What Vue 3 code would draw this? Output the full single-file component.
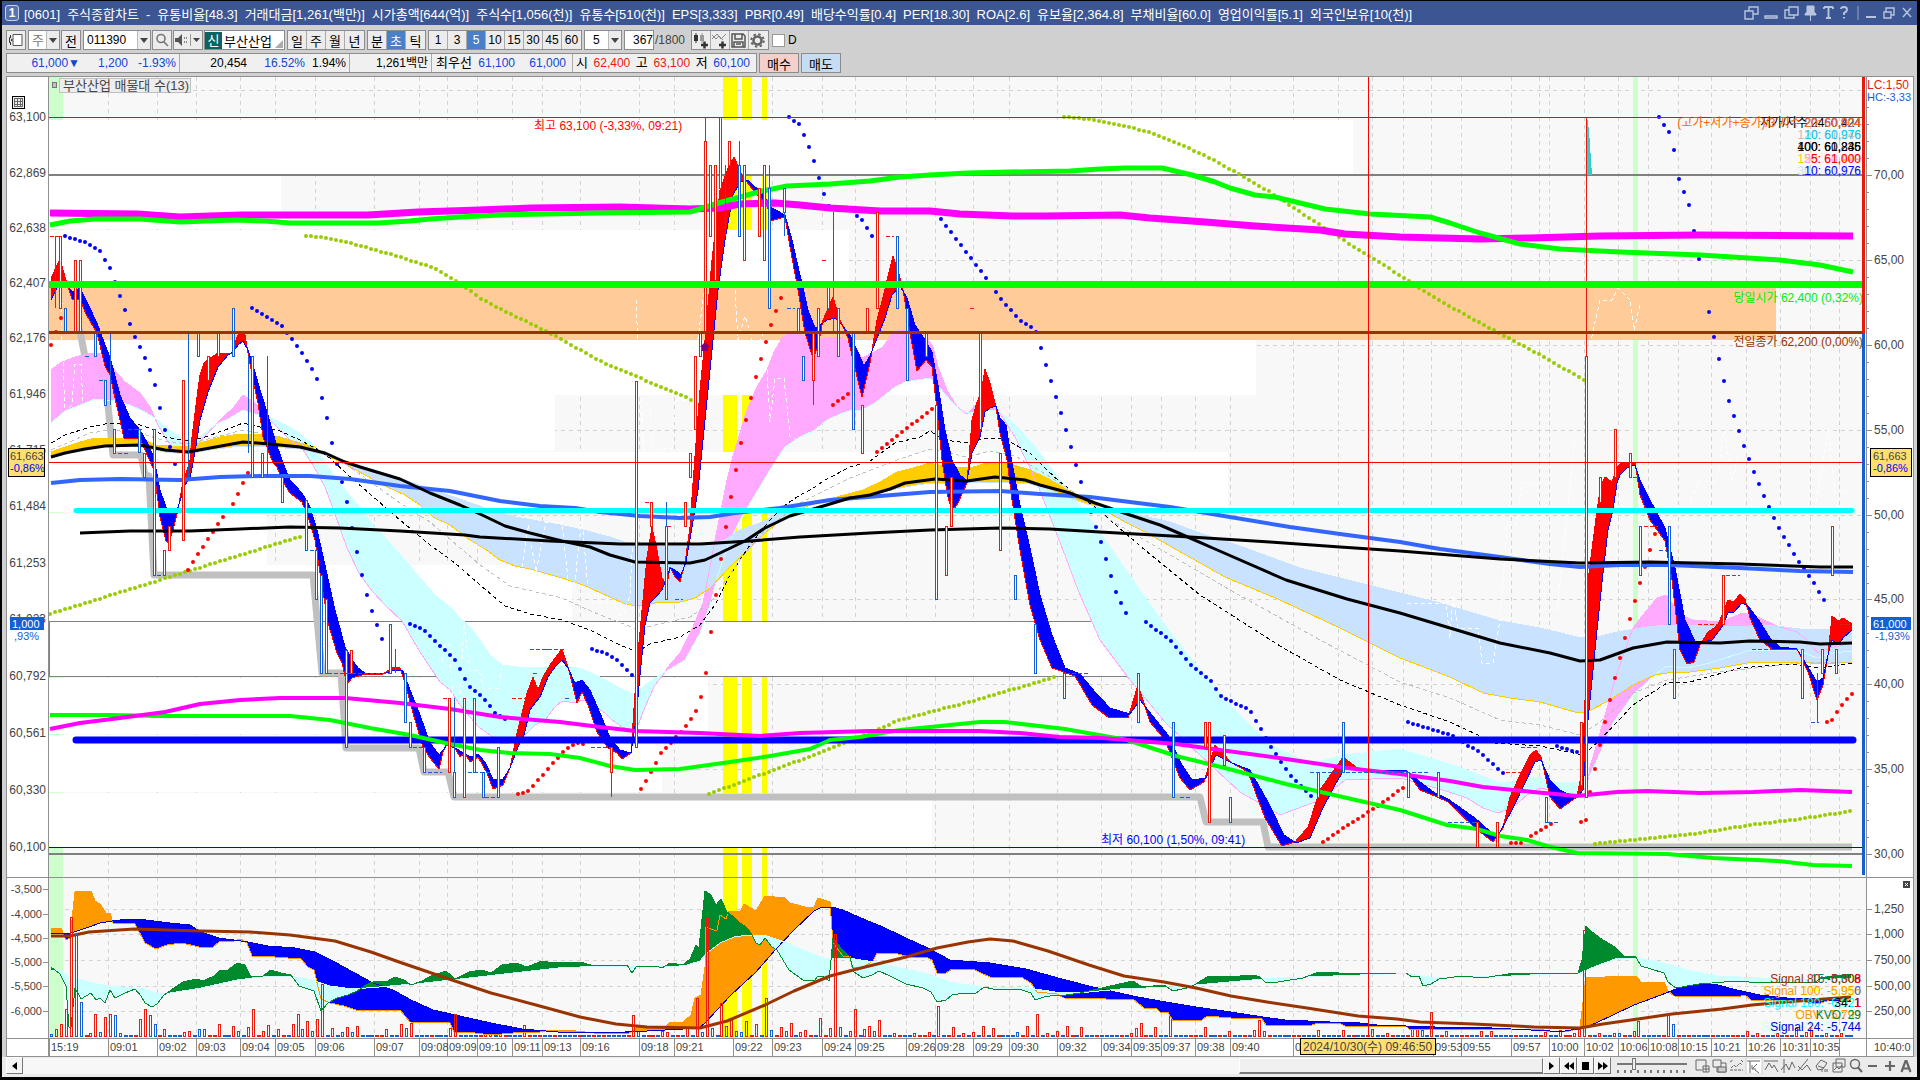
<script setup>
import { ref } from 'vue'

const code = ref('011390')
const count = ref('367')
const showD = ref(false)
const speed = ref(22)

const periods = ['일', '주', '월', '년']
const units = ['분', '초', '틱']
const intervals = ['1', '3', '5', '10', '15', '30', '45', '60']

const title = [
  '[0601]', '주식종합차트', '-', '유통비율[48.3]', '거래대금[1,261(백만)]', '시가총액[644(억)]', '주식수[1,056(천)]',
  '유통수[510(천)]', 'EPS[3,333]', 'PBR[0.49]', '배당수익률[0.4]', 'PER[18.30]', 'ROA[2.6]', '유보율[2,364.8]',
  '부채비율[60.0]', '영업이익률[5.1]', '외국인보유[10(천)]',
]

// ---------- helpers ----------
const parse = (s) => s.split(' ').map((p) => p.split(',').map(Number))

function at(pts, x) {
  for (let i = 1; i < pts.length; i++) {
    const [x0, y0] = pts[i - 1]
    const [x1, y1] = pts[i]
    if (x <= x1) return y0 + ((y1 - y0) * (x - x0)) / (x1 - x0 || 1)
  }
  return pts[pts.length - 1][1]
}

// area between two lines, split by which one is on top
function cloud(aStr, bStr) {
  const a = parse(aStr)
  const b = parse(bStr)
  const upper = []
  const lower = []
  const base = []
  for (let x = a[0][0]; x <= a[a.length - 1][0]; x++) {
    const ya = at(a, x)
    const yb = at(b, x)
    base.push(`${x},${yb.toFixed(1)}`)
    upper.push(`${x},${Math.min(ya, yb).toFixed(1)}`)
    lower.push(`${x},${Math.max(ya, yb).toFixed(1)}`)
  }
  const back = [...base].reverse().join(' ')
  return { up: upper.join(' ') + ' ' + back, down: lower.join(' ') + ' ' + back, a: aStr, b: bStr }
}

// dotted marks every 5px
function dots(list) {
  return list
    .map((s) => {
      const pts = parse(s)
      let d = ''
      for (let x = pts[0][0]; x <= pts[pts.length - 1][0]; x += 5) d += `M${x} ${at(pts, x).toFixed(0)}h0`
      return d
    })
    .join('')
}

// ---------- grid ----------
const gridX = [
  108, 157, 196, 240, 275, 315, 374, 419, 447, 477, 512, 542, 580, 639, 674, 733, 772, 822, 855, 906, 935, 973, 1009,
  1057, 1101, 1131, 1161, 1195, 1230, 1293, 1338, 1372, 1403, 1431, 1461, 1511, 1539, 1549, 1584, 1618, 1648, 1678, 1711,
  1746, 1780, 1810, 1839,
]
const gridY = [90, 175, 260, 345, 430, 515, 599, 684, 769, 909, 934, 960, 986, 1011]

const times = [
  [49, '15:19'], [108, '09:01'], [157, '09:02'], [196, '09:03'], [240, '09:04'], [275, '09:05'], [315, '09:06'],
  [374, '09:07'], [419, '09:08'], [447, '09:09'], [477, '09:10'], [512, '09:11'], [542, '09:13'], [580, '09:16'],
  [639, '09:18'], [674, '09:21'], [733, '09:22'], [772, '09:23'], [822, '09:24'], [855, '09:25'], [906, '09:26'],
  [935, '09:28'], [973, '09:29'], [1009, '09:30'], [1057, '09:32'], [1101, '09:34'], [1131, '09:35'], [1161, '09:37'],
  [1195, '09:38'], [1230, '09:40'], [1293, '0'], [1433, '09:53'], [1461, '09:55'], [1511, '09:57'], [1549, '10:00'],
  [1584, '10:02'], [1618, '10:06'], [1648, '10:08'], [1678, '10:15'], [1711, '10:21'], [1746, '10:26'], [1780, '10:31'],
  [1810, '10:35'],
]

const prices = [
  [117, '63,100'], [173, '62,869'], [228, '62,638'], [283, '62,407'], [338, '62,176'], [394, '61,946'], [450, '61,715'],
  [506, '61,484'], [563, '61,253'], [619, '61,023'], [676, '60,792'], [733, '60,561'], [790, '60,330'], [847, '60,100'],
]
const scaleRight = [
  [175, '70,00'], [260, '65,00'], [345, '60,00'], [430, '55,00'], [515, '50,00'], [599, '45,00'], [684, '40,00'],
  [769, '35,00'], [854, '30,00'], [909, '1,250'], [934, '1,000'], [960, '750,00'], [986, '500,00'], [1011, '250,00'],
]
const scaleObv = [
  [889, '-3,500'], [914, '-4,000'], [938, '-4,500'], [962, '-5,000'], [986, '-5,500'], [1011, '-6,000'],
]

// small ticks between the labelled ones
const minorTicks = []
for (let i = 0; i < 9; i++) {
  for (let k = 1; k < 5; k++) minorTicks.push(Math.round(90 + i * 85 - i * 0.1 + k * 17))
}

// volume by price: y, height, right end
const profile = [
  [120, 54, 1353], [176, 53, 281], [230, 54, 849], [340, 55, 1256], [395, 56, 555], [452, 60, 1228], [513, 52, 267],
  [565, 56, 572], [678, 56, 708], [735, 57, 662], [793, 54, 932],
]
const yellow = [[723, 14], [742, 10], [762, 5]]

// ---------- overlays ----------
const ribbon = cloud(
  '51,278 60,259 66,280 72,299 80,299 86,314 97,333 105,366 110,375 115,398 120,420 124,438 140,438 148,457 154,470 160,517 166,541 169,543 173,530 178,510 182,487 190,460 192,437 197,397 200,375 204,363 213,356 218,353 232,353 237,337 241,331 245,335 248,353 253,380 258,403 263,437 268,450 273,463 277,467 283,482 290,493 302,502 310,523 315,540 320,573 328,623 337,653 342,663 347,684 352,678 365,674 383,674 393,667 400,668 405,683 413,713 423,747 430,758 439,769 443,752 450,737 455,748 460,757 465,753 470,762 478,757 487,773 493,789 503,785 510,768 517,733 527,693 533,677 538,690 543,677 552,662 562,649 568,667 577,703 582,692 588,705 597,732 608,748 617,753 622,759 631,753 635,693 638,653 643,600 647,557 652,527 657,550 662,578 667,585 670,567 675,577 680,582 685,563 690,527 693,483 700,390 705,340 712,260 720,190 728,168 734,157 742,175 747,182 753,190 760,198 767,203 770,221 785,217 790,247 798,290 805,333 813,358 818,347 823,320 833,297 840,320 848,338 853,360 862,397 870,363 877,320 883,297 893,256 898,270 903,290 910,333 917,371 926,360 932,367 937,410 942,460 947,493 952,512 958,503 967,483 972,420 977,402 981,393 985,369 990,383 996,407 1000,433 1007,460 1012,500 1020,550 1030,605 1040,640 1052,668 1075,676 1092,705 1108,717 1128,718 1138,685 1150,722 1165,740 1180,778 1190,790 1204,782 1215,745 1232,763 1248,772 1265,818 1282,846 1295,842 1308,827 1320,790 1343,757 1360,770 1407,772 1420,790 1435,796 1448,802 1475,828 1493,842 1503,828 1510,797 1520,775 1530,755 1536,750 1541,757 1550,797 1560,809 1577,797 1582,770 1585,700 1587,640 1589,573 1597,510 1601,485 1605,477 1612,482 1617,467 1622,462 1635,462 1640,495 1650,520 1665,541 1672,580 1680,650 1687,664 1694,662 1700,645 1708,632 1718,625 1728,600 1734,602 1740,594 1745,599 1750,618 1760,640 1772,649 1797,649 1808,672 1817,700 1823,685 1828,655 1832,616 1838,621 1843,618 1852,624',
  '51,300 60,282 66,284 72,292 80,288 86,300 97,323 105,345 110,357 120,395 130,418 140,430 148,444 154,458 160,490 166,507 171,513 178,507 185,485 190,478 195,452 200,420 208,392 218,367 228,355 233,352 238,345 243,341 248,350 253,365 260,390 268,415 275,440 283,463 290,480 302,493 310,507 317,530 325,565 335,610 345,647 352,660 358,668 365,673 383,674 395,670 403,671 410,690 420,715 430,743 439,755 447,745 455,748 462,752 470,757 478,754 485,762 493,779 503,779 510,768 518,747 524,735 530,710 535,703 540,697 548,677 555,667 562,660 568,668 575,683 582,680 590,690 600,713 610,738 620,750 631,753 636,720 640,675 645,625 650,603 655,598 662,590 667,577 670,568 675,570 681,575 686,562 692,527 698,490 705,420 712,350 718,290 725,240 733,195 740,182 748,180 755,187 762,192 770,207 785,215 792,240 800,275 808,310 815,328 820,325 827,320 835,318 842,325 850,335 858,352 864,366 870,356 877,338 885,318 892,295 900,286 907,298 915,325 925,340 932,352 938,385 945,430 952,460 960,475 967,481 972,453 980,437 985,412 990,408 996,406 1000,418 1006,425 1012,463 1020,505 1030,548 1040,595 1052,635 1065,668 1080,674 1095,692 1110,708 1130,714 1140,700 1152,715 1168,735 1182,765 1192,780 1206,778 1216,755 1232,763 1250,770 1268,802 1284,835 1296,843 1310,838 1322,810 1335,785 1345,768 1360,770 1407,771 1420,782 1435,793 1448,799 1475,818 1493,834 1500,832 1512,810 1525,783 1535,762 1541,760 1550,780 1560,790 1577,798 1583,790 1588,720 1592,680 1596,640 1603,573 1608,530 1613,510 1617,483 1620,475 1627,468 1635,465 1640,480 1650,500 1665,528 1675,568 1685,620 1695,641 1703,642 1712,640 1722,627 1728,613 1734,612 1742,603 1748,606 1760,622 1770,638 1780,647 1797,649 1808,667 1817,682 1823,678 1828,655 1832,640 1838,645 1843,638 1852,630',
)
const pink = cloud(
  '51,370 60,363 75,357 87,354 100,353 110,365 125,382 140,393 150,407 158,425 165,437 173,448 183,452 193,450 205,436 220,420 233,408 243,395 255,403 268,418 280,430 290,440 303,450 313,465 325,487 335,514 347,548 360,575 373,592 385,605 402,621 420,652 440,682 450,690 460,705 470,717 480,728 490,735 500,743 510,743 525,735 535,725 545,720 555,707 562,701 575,703 583,700 595,707 605,713 612,720 622,727 632,730 637,728 645,707 655,685 663,675 668,667 680,653 693,627 703,603 710,567 717,530 727,480 732,460 740,433 747,410 757,387 767,370 775,350 783,337 792,333 802,335 813,343 827,337 843,338 853,347 862,358 872,353 883,347 893,332 902,330 913,333 927,338 933,347 938,367 947,390 957,407 967,414 973,408 980,403 987,403 995,406 1003,418 1015,437 1037,483 1063,550 1078,590 1100,640 1130,680 1165,722 1200,755 1240,792 1280,815 1320,800 1345,780 1400,778 1443,790 1467,798 1483,808 1498,813 1513,807 1527,795 1540,788 1550,790 1573,797 1587,787 1590,767 1600,733 1617,673 1633,628 1643,615 1657,598 1666,595 1680,615 1693,620 1720,622 1743,613 1760,618 1777,626 1797,632 1807,640 1818,653 1830,648 1852,643',
  '51,423 65,411 80,405 95,399 115,401 130,405 145,412 155,418 163,425 175,434 188,440 195,440 205,433 215,425 230,418 243,410 255,414 268,417 280,422 295,430 310,442 320,455 335,477 347,492 360,508 375,527 390,543 405,560 420,578 435,595 450,607 460,618 470,627 480,640 490,655 502,665 525,668 545,667 560,665 582,669 600,677 620,688 635,695 645,685 655,678 665,672 675,666 685,660 700,633 710,605 718,575 728,545 740,520 755,495 765,478 775,462 785,447 800,437 815,430 827,420 840,414 852,410 862,410 875,403 885,395 895,387 905,382 930,378 938,386 950,400 960,410 967,413 975,412 985,411 995,410 1007,417 1032,443 1047,463 1073,497 1093,523 1112,550 1140,590 1170,632 1200,670 1230,705 1270,745 1310,763 1345,755 1400,749 1443,762 1467,770 1500,783 1540,777 1550,782 1583,783 1590,775 1597,760 1613,723 1633,695 1657,673 1667,666 1687,668 1710,663 1747,651 1797,650 1817,658 1833,653 1852,651',
)
const gold = cloud(
  '51,452 65,447 80,442 95,438 115,438 140,438 155,445 185,447 200,443 220,437 240,434 260,434 280,437 300,443 315,447 325,455 347,465 365,475 385,486 405,495 420,505 433,517 450,525 470,540 485,549 500,560 515,566 530,569 562,578 583,585 610,597 625,604 637,606 655,603 680,602 695,598 710,588 730,567 750,548 765,533 785,517 805,507 833,498 863,490 880,482 897,472 913,468 930,463 947,467 970,468 987,463 1007,463 1030,470 1047,478 1073,493 1100,508 1127,523 1147,533 1177,550 1225,577 1280,600 1340,628 1400,658 1450,677 1483,693 1510,698 1540,702 1575,712 1587,712 1610,700 1633,685 1655,675 1667,673 1690,672 1720,668 1747,663 1800,662 1820,664 1852,662',
  '51,458 80,450 110,446 140,447 165,452 188,454 210,450 240,446 270,447 300,449 330,456 365,467 400,478 430,489 460,499 485,508 515,517 550,523 583,530 610,537 630,544 660,547 700,546 725,540 740,530 760,523 780,512 800,507 830,500 870,495 905,487 930,483 967,483 1000,482 1030,484 1050,490 1075,500 1100,508 1130,513 1170,522 1200,533 1240,546 1300,568 1400,593 1440,603 1500,621 1540,628 1577,637 1597,637 1617,632 1647,627 1667,625 1733,627 1767,625 1800,629 1852,629',
)

const curves = [
  ['#f0f', 7, '50,213 137,214 180,217 240,215 368,215 418,212 480,210 531,208 620,207 690,209 720,208 740,204 775,203 800,205 830,208 880,211 930,211 960,214 1013,216 1045,216 1120,215 1150,218 1205,222 1255,226 1320,230 1345,234 1400,237 1440,238 1480,239 1530,238 1600,236 1700,235 1853,236'],
  ['#0f0', 5, '50,225 70,221 95,219 140,219 180,222 235,220 265,221 290,223 378,223 410,221 430,219 460,217 480,216 500,215 600,213 690,212 715,204 740,197 762,191 787,186 830,184 870,181 900,177 930,175 968,173 1010,172 1070,171 1100,169 1125,168 1162,168 1175,171 1192,175 1215,182 1230,188 1255,195 1275,197 1300,203 1325,209 1370,214 1430,217 1450,223 1480,233 1520,244 1560,249 1620,252 1700,255 1780,260 1820,265 1853,272'],
  ['#36f', 4, '51,483 80,480 120,479 180,480 220,477 260,476 310,476 350,479 400,486 450,491 500,501 540,506 575,508 600,512 640,516 680,518 710,517 735,513 780,508 830,500 880,496 930,492 1000,491 1040,494 1090,497 1170,507 1230,517 1290,527 1340,534 1400,542 1440,549 1500,557 1550,564 1580,567 1620,565 1670,565 1740,568 1800,571 1853,572'],
  ['#000', 3, '51,457 65,453 85,449 105,446 140,445 165,450 188,452 210,448 243,442 270,444 300,447 325,453 345,462 360,467 400,479 430,493 460,505 480,514 505,526 530,533 562,541 590,547 610,555 635,562 690,563 705,560 720,553 745,541 765,528 790,516 820,507 850,498 870,495 890,489 905,483 935,479 967,481 995,477 1025,480 1040,485 1070,493 1095,503 1130,515 1160,525 1190,538 1215,549 1286,580 1347,599 1400,613 1450,628 1500,643 1550,653 1580,661 1600,660 1633,648 1667,642 1720,643 1750,641 1800,642 1820,644 1852,643'],
  ['#000', 3, '80,533 130,531 190,531 240,529 290,527 340,528 400,531 465,535 480,537 550,541 620,544 700,544 750,541 800,537 870,533 930,530 1000,528 1050,529 1100,532 1190,537 1270,542 1340,547 1400,551 1500,559 1580,563 1650,562 1740,564 1820,567 1853,567'],
  ['#0f0', 4, '50,715 110,715 160,716 290,716 330,720 370,728 410,735 450,744 480,750 510,753 550,754 580,758 610,766 635,770 680,769 730,762 770,756 810,749 830,740 860,737 900,730 940,726 980,722 1004,722 1065,729 1127,740 1176,756 1225,768 1286,784 1347,798 1400,810 1447,825 1477,829 1500,836 1527,840 1547,846 1577,853 1667,854 1713,858 1777,861 1813,865 1852,866'],
  ['#f0f', 4, '50,729 80,723 120,718 165,712 200,704 240,700 280,698 345,698 400,703 450,709 500,717 560,722 600,727 635,731 700,733 760,736 800,733 870,731 980,731 1020,733 1060,737 1102,738 1176,744 1286,759 1347,768 1400,774 1450,781 1483,787 1533,792 1577,796 1617,792 1647,791 1700,793 1753,792 1800,790 1852,792'],
]
const dashed = [
  ['#000', '51,443 65,435 90,427 110,423 140,425 155,430 165,437 188,441 205,437 225,430 243,423 255,426 280,431 300,440 315,448 330,458 347,474 370,494 400,520 430,545 455,563 480,585 505,606 530,614 562,620 590,630 620,645 637,652 650,644 680,637 700,625 715,605 730,575 750,545 770,520 785,505 800,495 812,489 825,480 850,467 870,461 895,443 920,437 930,431 945,440 967,443 985,438 1005,439 1030,453 1047,470 1060,482 1075,493 1095,507 1110,520 1145,550 1200,595 1280,646 1340,680 1400,705 1450,722 1495,743 1540,746 1583,755 1600,740 1633,705 1667,683 1690,682 1740,668 1790,664 1820,668 1852,663'],
  ['#c0c0c0', '51,450 90,433 110,430 140,433 165,441 188,444 220,436 243,430 280,437 310,447 347,465 400,503 430,522 480,565 510,586 562,598 600,615 637,629 660,624 690,617 710,603 740,560 765,530 800,503 850,478 900,459 930,449 967,457 990,451 1015,456 1047,475 1075,493 1110,520 1160,549 1230,590 1320,640 1400,682 1450,698 1500,720 1540,725 1580,735 1600,722 1633,693 1667,680 1720,672 1800,663 1852,662'],
  ['#fff', '63,303 61,303 62,345'],
  ['#fff', '63,362 65,412 72,405 75,364 81,364 83,405'],
  ['#fff', '442,662 445,644 449,644 453,700 460,700 464,625 470,670 479,670 484,688 499,688 503,660'],
  ['#fff', '522,567 528,525 536,572 546,522 562,522 568,580 574,590 582,517 588,590 592,602 614,602 622,620 630,595 634,510'],
  ['#fff', '636,300 638,345 645,480 642,415 650,408 653,450 672,448 676,400 690,400 705,285'],
  ['#fff', '735,290 738,340 745,316 752,340 760,340 765,330'],
  ['#fff', '767,370 770,422 775,378 784,378 790,436 797,440'],
  ['#fff', '1407,603 1446,603 1450,638 1453,595 1458,628 1478,628 1482,663 1493,663 1500,620 1507,525 1516,525 1522,483 1537,483 1546,609 1557,609 1575,440'],
  ['#fff', '1590,345 1600,300 1612,300 1618,288 1630,300 1634,330 1640,305'],
  ['#fff', '1690,501 1698,482 1717,481 1724,427 1732,480 1745,427 1752,510 1815,510 1828,430 1835,492 1850,492'],
]
const stair =
  '75,331 80,331 85,357 98,357 108,405 113,455 141,455 145,475 149,476 154,575 313,575 322,673 341,673 346,748 419,748 424,772 448,772 454,797 1200,797 1206,822 1263,822 1268,847 1852,847'

const olive = dots([
  '50,614 302,536',
  '306,236 322,237 350,243 390,254 435,268 460,283 480,298 500,309 550,333 600,361 640,378 692,400',
  '709,794 760,775 830,749 900,720 980,699 1058,676',
  '1064,117 1090,119 1130,127 1155,134 1180,144 1210,158 1235,172 1270,192 1300,212 1340,238 1390,269 1440,301 1495,331 1540,355 1584,380',
  '1595,844 1640,839 1700,833 1750,825 1800,819 1852,811',
])
const sarDown = dots([
  '65,236 85,242 100,251 110,268 119,293 134,335 144,355 154,380 164,426 174,461 179,475',
  '252,308 282,326 301,351 316,375 326,413 331,439 336,460 346,497 356,548 365,588 370,605 380,634 385,646',
  '410,624 424,630 439,645 454,658 469,686 483,697 495,713 508,721',
  '592,649 610,655 618,661 632,675',
  '789,117 800,125 808,145 813,157 818,175 823,191 829,206',
  '857,216 862,220 872,236',
  '941,219 960,244 980,270 1000,298 1020,320 1035,329 1039,341 1049,375 1059,406 1069,440 1079,476 1089,506 1103,548 1115,590 1130,622',
  '1146,622 1170,640 1190,664 1210,680 1222,697 1250,710 1270,745 1290,775 1311,796',
  '1408,722 1453,736 1467,745 1477,750 1503,773',
  '1557,746 1577,752',
  '1659,117 1664,125 1669,132 1674,150 1679,179 1690,208 1702,276 1714,337 1728,398 1743,443 1753,470 1763,494 1777,525 1797,559 1812,580 1824,600',
])
const sarUp = dots([
  '51,345 61,318',
  '188,570 198,554 208,539 223,517 233,504 243,483 248,473',
  '518,794 528,791 543,775 562,753 575,743 583,744',
  '641,789 651,772 661,753 670,744 685,727 695,714 700,701 705,681 710,640 715,602 720,566 725,533 730,503 735,475 740,448 745,425 750,402 755,381 760,362 765,345 770,328 775,313 781,298',
  '833,405 848,394',
  '877,452 893,439 932,409',
  '1323,842 1345,827 1375,808 1404,787',
  '1511,843 1521,843 1530,837 1551,824',
  '1581,822 1586,820',
  '1590,792 1595,769 1600,745 1605,722 1610,700 1615,678 1620,658 1625,638 1630,619 1635,601 1640,583 1645,567 1650,550 1655,534',
  '1827,722 1832,720 1836,713 1841,706 1852,694',
])

// candles: x, top, bottom, wick top, wick bottom
const candlesUp = [
  [60, 236, 308], [75, 260, 332], [80, 260, 332], [55, 236, 236, 236, 308], [183, 380, 540], [208, 356, 380],
  [218, 333, 356], [164, 550, 575], [169, 526, 550], [326, 599, 673], [351, 650, 673], [449, 698, 772],
  [464, 698, 797], [611, 747, 772, 747, 797], [636, 381, 747], [651, 502, 526], [685, 502, 526], [690, 453, 477],
  [695, 356, 429], [700, 333, 356], [705, 141, 333, 117, 333], [710, 165, 236], [715, 165, 280], [720, 117, 188],
  [729, 141, 165], [744, 165, 260], [759, 188, 236], [764, 165, 260], [813, 333, 380, 333, 405], [818, 308, 356],
  [862, 405, 453], [867, 308, 333], [877, 212, 308], [946, 526, 575], [951, 477, 526], [1000, 453, 550],
  [1205, 722, 747], [1224, 735, 765], [1209, 722, 822], [1318, 772, 797], [1477, 822, 847], [1497, 822, 847],
  [1581, 722, 785], [1586, 356, 797, 117, 797], [1600, 477, 502], [1615, 429, 477], [1630, 453, 477],
  [1723, 575, 624], [1822, 649, 673], [1832, 526, 575],
]
const candlesDown = [
  [65, 308, 332], [95, 333, 356], [105, 380, 405], [110, 333, 333, 333, 405], [114, 429, 453], [139, 429, 452],
  [144, 453, 477], [154, 429, 575], [188, 333, 333, 333, 480], [198, 333, 356], [233, 308, 356],
  [248, 356, 356, 356, 453], [252, 356, 477], [262, 453, 477], [267, 356, 356, 356, 477], [282, 477, 502],
  [306, 500, 550], [316, 550, 599], [321, 575, 673], [346, 650, 747], [390, 624, 673], [395, 649, 649, 649, 673],
  [405, 673, 722], [410, 722, 747], [424, 747, 772], [454, 772, 797, 698, 797], [474, 698, 772], [483, 772, 797],
  [498, 747, 797], [666, 526, 599, 502, 599], [725, 165, 165, 165, 236], [739, 165, 236, 141, 236],
  [769, 188, 308, 165, 308], [784, 188, 212, 188, 236], [798, 308, 333], [803, 356, 380], [828, 284, 308],
  [833, 212, 212, 212, 333], [838, 308, 356], [853, 333, 429], [897, 236, 308], [907, 308, 380], [926, 333, 356],
  [936, 405, 599], [980, 333, 429], [1015, 575, 599], [1035, 624, 673], [1064, 673, 698], [1138, 673, 722],
  [1173, 722, 797], [1230, 797, 822], [1343, 722, 772], [1408, 772, 797], [1438, 772, 797], [1546, 797, 822],
  [1640, 526, 575], [1669, 526, 624], [1674, 649, 698], [1802, 649, 698], [1817, 673, 673, 673, 722], [1836, 649, 673],
]
const candlePath = (list) =>
  list
    .map(([x, t, b, w1 = t, w2 = b]) => {
      const body = t < b ? `M${x - 1}.5 ${t}.5h2V${b}.5h-2z` : ''
      const wick = (w1 < t ? `M${x}.5 ${w1}V${t}` : '') + (w2 > b ? `M${x}.5 ${b}V${w2}` : '')
      return body + wick
    })
    .join('')
const bodyPath = (list) => list.filter(([, t, b]) => t < b).map(([x, t, b]) => `M${x}.5 ${t + 1}V${b}`).join('')

const dashUp =
  'M50 236h10M128 429h14M512 698h14M530 649h34M545 649h6M645 502h6M667 526h5M886 236h8M822 260h4M970 308h4M443 698h4M1506 772h20M1521 747h18M1698 624h26M1726 575h14M1633 477h6M1644 526h14M1840 624h12'
const dashDown =
  'M85 356h5M99 380h6M118 453h10M157 575h8M310 550h6M328 673h64M413 747h10M428 772h14M468 772h24M485 797h14M533 673h4M565 698h4M591 747h22M675 599h8M787 308h8M1066 673h22M1180 797h10M1310 772h120M1448 822h30M1752 649h48M1548 822h10M1811 722h8M1659 550h8'

// ---------- lower pane ----------
const obv = cloud(
  '51,928 61,928 66,940 70,938 75,892 91,891 95,901 100,904 106,913 110,913 113,923 135,924 145,943 156,949 167,945 182,943 199,947 213,947 219,942 234,941 241,939 247,943 252,956 275,957 301,959 308,967 314,970 321,999 330,1003 344,1006 356,1010 400,1010 410,1022 450,1023 454,1032 475,1033 491,1035 513,1033 540,1032 549,1030 576,1031 594,1033 629,1033 638,1027 665,1027 670,1022 683,1022 691,1015 695,998 701,995 705,967 706,927 714,930 717,930 720,915 726,919 729,911 740,912 744,904 756,911 765,896 785,898 790,903 805,907 814,907 818,898 830,902 833,943 843,956 850,956 852,967 863,967 873,961 877,953 894,953 910,957 926,957 932,960 937,973 946,973 952,969 975,970 981,973 990,977 1021,977 1031,983 1037,992 1057,994 1064,998 1106,999 1133,999 1144,1008 1156,1008 1160,1012 1168,1012 1173,1021 1202,1020 1207,1016 1231,1018 1262,1019 1266,1025 1312,1025 1318,1023 1341,1024 1345,1026 1383,1026 1406,1026 1409,1029 1473,1029 1542,1029 1548,1032 1569,1031 1580,1028 1586,977 1596,978 1615,976 1626,977 1636,976 1641,982 1664,982 1668,991 1674,996 1737,997 1745,995 1751,1000 1798,1000 1808,1003 1821,1003 1833,999 1851,998',
  '51,933 71,933 89,927 100,923 112,921 129,919 138,919 170,923 190,925 201,932 219,938 248,942 268,946 295,948 315,952 333,961 373,983 393,990 411,1000 433,1010 451,1014 473,1019 496,1024 522,1029 558,1032 625,1032 647,1031 683,1029 700,1027 705,1023 731,995 756,972 776,949 794,930 814,911 822,907 832,907 843,910 861,918 883,927 908,939 928,948 950,960 990,963 1026,969 1062,979 1093,987 1133,996 1160,1001 1196,1007 1231,1012 1263,1017 1285,1020 1330,1022 1360,1023 1377,1025 1435,1027 1492,1028 1550,1031 1565,1031 1584,1028 1596,1023 1634,1005 1661,995 1676,989 1699,984 1718,985 1737,990 1760,995 1787,998 1818,999 1851,1002',
)
const kvo = cloud(
  '51,967 60,974 66,986 69,1027 71,1027 75,988 81,999 91,993 96,1000 100,998 105,1003 110,990 115,998 125,993 135,989 141,996 145,1003 152,1007 157,1004 164,995 174,988 183,982 196,979 203,981 214,976 219,971 228,970 237,963 245,965 251,977 263,976 271,970 281,973 291,975 299,986 314,991 321,1011 328,1003 337,998 348,995 357,991 366,985 375,981 386,982 395,977 404,980 411,985 422,981 431,976 446,971 455,979 469,972 482,970 491,973 502,965 516,963 527,967 542,961 554,963 580,962 594,966 627,965 632,973 636,967 656,966 662,968 670,963 683,965 690,959 696,945 699,948 705,891 711,895 716,905 721,899 727,912 734,917 740,923 746,927 751,933 756,943 760,945 765,938 772,947 777,950 789,970 803,980 814,981 818,976 824,977 829,981 831,960 833,938 841,948 850,957 854,972 863,978 872,975 879,971 890,976 906,984 923,988 931,992 937,1002 946,1000 952,995 964,993 975,994 984,987 993,989 1022,990 1031,993 1035,1000 1044,997 1057,995 1066,995 1080,993 1106,987 1133,981 1142,987 1164,985 1173,991 1191,987 1202,980 1209,976 1227,977 1254,975 1260,977 1266,983 1278,982 1303,978 1316,973 1334,972 1343,974 1397,973 1406,973 1412,977 1419,976 1423,986 1431,984 1439,979 1462,976 1483,978 1508,974 1534,973 1557,973 1578,973 1582,960 1586,926 1592,932 1603,940 1615,947 1624,956 1636,957 1641,966 1664,973 1668,982 1676,988 1699,984 1737,981 1760,983 1798,982 1814,983 1821,978 1833,976 1851,974',
  '51,970 61,971 71,977 89,982 107,986 134,988 145,989 156,993 170,993 201,988 237,980 268,976 290,976 312,980 330,986 353,989 379,987 424,983 469,978 513,973 558,968 603,966 679,966 687,965 700,961 707,953 720,943 734,937 749,935 767,936 785,942 803,950 821,957 830,959 848,958 874,962 901,968 928,974 950,982 981,987 1017,988 1035,989 1062,993 1089,992 1120,989 1173,987 1218,983 1263,979 1307,977 1360,975 1406,973 1435,978 1473,977 1511,976 1550,974 1580,973 1596,966 1618,958 1638,958 1664,963 1687,970 1718,976 1760,978 1810,980 1851,978',
)
const brown =
  '51,936 70,936 89,932 134,929 201,931 250,932 290,935 335,941 371,952 402,963 446,978 491,993 536,1005 580,1017 616,1024 647,1027 700,1028 727,1021 765,1005 794,991 830,976 861,968 906,957 937,948 968,942 990,939 1013,941 1048,951 1089,965 1124,976 1164,982 1196,988 1231,996 1267,1002 1307,1008 1358,1016 1397,1019 1420,1022 1473,1024 1534,1027 1580,1028 1603,1024 1645,1018 1672,1014 1722,1009 1752,1005 1798,1001 1851,997'

// volume: bar index (5px pitch) -> height, negative for a down bar
const volume = {
  0: -2, 1: 7, 2: 12, 3: 27, 4: 119, 5: -102, 6: -34, 8: 3, 9: 22, 10: -4, 11: 19, 12: 22, 13: -21, 14: -3, 18: 17,
  19: 27, 20: -21, 21: -12, 23: 7, 27: 4, 28: 5, 30: -7, 31: -7, 34: 12, 37: 10, 38: -5, 40: 9, 41: 27, 43: 5, 44: 11,
  46: 7, 49: 12, 50: 22, 51: -7, 52: 15, 53: -5, 54: 17, 55: 52, 57: 8, 59: -4, 60: 9, 61: -4, 62: 10, 68: 7, 71: 12,
  72: -8, 73: 13, 81: 8, 82: 22, 88: 5, 89: 12, 91: 6, 96: 11, 118: 21, 119: -8, 124: 5, 125: 4, 129: 12, 131: 38,
  132: -4, 133: 119, 134: -8, 136: 33, 137: -10, 138: 16, 139: -5, 140: -4, 141: 15, 143: 12, 145: 38, 146: -6, 148: 9,
  149: -5, 150: 13, 152: 4, 153: 6, 156: 18, 158: 8, 159: 102, 160: -9, 162: 5, 163: 27, 165: 7, 166: 10, 167: -5,
  168: 16, 171: 3, 175: 3, 178: 4, 180: 30, 183: 9, 185: 3, 187: 4, 189: 10, 191: 8, 196: -4, 198: 10, 200: 22, 202: 3,
  204: 5, 206: 10, 209: 9, 219: 3, 220: 8, 221: 13, 224: 9, 227: 20, 234: 9, 239: 5, 244: 6, 245: 16, 246: -5, 257: 6,
  262: 6, 268: 7, 271: 3, 276: 7, 277: 7, 278: -6, 280: 24, 283: 5, 290: 5, 292: 5, 303: 4, 306: 6, 309: 3, 310: 7,
  311: 106, 314: 3, 317: 3, 318: -3, 321: 5, 322: 15, 328: 22, 329: -12, 344: 5, 346: 3, 350: 3, 354: 8, 356: 4, 357: 8,
  360: 3, 363: 3,
}
const bars = []
for (let i = 0; i < 366; i++) {
  const v = volume[i] ?? (i % 5 === 2 || i % 11 === 0 ? 1 : -1)
  const h = Math.abs(v)
  bars.push({ x: 50 + Math.round(i * 4.93), y: 1036 - h, h, up: v > 0 })
}

const cornerLabels = [
  [123, [['#000', '저가/지수 24: 0,424'], ['#36f', '20: 60,824'], ['#ff6600', '(고가+저가+종가)/3 지수 20: 60,904']]],
  [135, [['#c0c0c0', '120: 61,246'], ['#00ccff', '10: 60,976']]],
  [147, [['#000', '100: 61,245'], ['#000', '400: 60,836']]],
  [159, [['#fc0', '150: 61,499'], ['#f9f', '25: 60,949'], ['#f00', '5: 61,000']]],
  [171, [['#c8e2ff', '300: 61,176'], ['#00f', '10: 60,976']]],
  [979, [['#008080', '15: 6,006'], ['#930', 'Signal 80: -5,308'], ['#f00', '8']]],
  [991, [['#ff0', '1은: -5,910'], ['#f90', 'Signal 100: -5,956'], ['#36f', '0']]],
  [1003, [['#0ff', 'Signal 180: -6,021'], ['#000', '34: 1'], ['#f00', '1']]],
  [1015, [['#f90', 'OBV: -5,799'], ['#008a2e', 'KVO: 29']]],
  [1027, [['#cff', 'Signal 200: 29,776'], ['#00c', 'Signal 24: -5,744']]],
]
</script>

<template>
  <div class="window">
    <header class="titlebar">
      <span class="badge">1</span>
      <h1>
        <span v-for="t in title" :key="t">{{ t }}</span>
      </h1>
      <div class="winIcons">
        <svg width="170" height="18" viewBox="0 0 170 18" fill="none" stroke="#b9c5de" stroke-width="1.4">
          <path d="M1 7h8v8H1zM5 7V3h9v7H9M21 12h12v2H21zM45 3h9v8h-9zM45 6h-4v8h9v-3" />
          <path d="M63 2h7v6l2 2v1H61v-1l2-2zM66.500 11v6" fill="#b9c5de" stroke-width="1" />
          <path d="M80 3h9M84.500 3v11M82 14h5M80 3v2M89 3v2M97 5q0-2 3-2t3 2.500q0 2-3 3.500v2M100 13v1.500" stroke-width="1.900" />
          <path d="M114 2v14" stroke="#7f8eb0" />
          <path d="M122 13h10" stroke-width="2" />
          <path d="M140 8h7v6h-7zM142 8V4h8v7h-3M159 4l8 9M167 4l-8 9" />
        </svg>
      </div>
    </header>

    <div class="toolbar">
      <button class="btn" aria-label="패널">
        <svg width="14" height="14" viewBox="0 0 14 14"><path d="M4 1.500h9v11H4z" fill="#fff" stroke="#555" /><path d="M0 4v6l4-3zM1 2h1v10H1z" fill="#333" /></svg>
      </button>
      <span class="combo w32 grey">
        <select aria-label="주기"><option>주</option></select>
        <svg width="8" height="5" viewBox="0 0 8 5"><path d="M0 0h8L4 5z" fill="#444" /></svg>
      </span>
      <button class="btn">전</button>
      <span class="combo w68">
        <input v-model="code" type="text" aria-label="종목코드" />
        <svg width="8" height="5" viewBox="0 0 8 5"><path d="M0 0h8L4 5z" fill="#444" /></svg>
      </span>
      <button class="btn" aria-label="검색">
        <svg width="14" height="14" viewBox="0 0 14 14" fill="none" stroke="#777" stroke-width="1.600"><circle cx="6" cy="5.500" r="4" /><path d="M8.500 8.500L13 13" /></svg>
      </button>
      <button class="btn w30" aria-label="소리">
        <svg width="26" height="12" viewBox="0 0 26 12"><path d="M0 4h3l4-4v12L3 8H0z" fill="#555" /><path d="M9 3h1v2H9zM9 7h1v2H9zM11 3h1v2h-1zM11 7h1v2h-1z" fill="#888" /><path d="M15.500 0v12" stroke="#999" /><path d="M18 4h7l-3.500 4z" fill="#444" /></svg>
      </button>
      <div class="stock"><b>신</b><span>부산산업</span><i></i></div>
      <div class="group">
        <button v-for="p in periods" :key="p">{{ p }}</button>
      </div>
      <div class="group">
        <button v-for="u in units" :key="u" :class="{ on: u === '초' }">{{ u }}</button>
      </div>
      <div class="group num">
        <button v-for="n in intervals" :key="n" :class="{ on: n === '5' }">{{ n }}</button>
      </div>
      <span class="combo w38">
        <select aria-label="간격"><option>5</option></select>
        <svg width="8" height="5" viewBox="0 0 8 5"><path d="M0 0h8L4 5z" fill="#444" /></svg>
      </span>
      <input v-model="count" class="count" type="text" aria-label="조회수" />
      <span class="total">/1800</span>
      <div class="group icons">
        <button aria-label="봉 추가">
          <svg width="17" height="17" viewBox="0 0 17 17"><path d="M2 3h4v6H2zM3.500 1h1v10h-1z" fill="#333" /><path d="M8 3h4v6H8zM9.500 1h1v10h-1z" fill="#999" /><path d="M9 13h7M12.500 9.500v7" stroke="#333" stroke-width="2.500" /></svg>
        </button>
        <button aria-label="지표 추가">
          <svg width="17" height="17" viewBox="0 0 17 17"><path d="M1 7l5-5 4 5 5-5M1 3l4 4 3-3 4 4" fill="none" stroke="#888" /><path d="M8 13h7M11.500 9.500v7" stroke="#333" stroke-width="2.500" /></svg>
        </button>
        <button aria-label="저장">
          <svg width="17" height="17" viewBox="0 0 17 17"><path d="M2 2h11l2 2v11H2zM5 2v5h7V2M4 15v-5h9v5M6 12h5" fill="none" stroke="#555" stroke-width="1.500" /></svg>
        </button>
        <button aria-label="설정">
          <svg width="17" height="17" viewBox="0 0 17 17" fill="none" stroke="#666"><circle cx="8.500" cy="8.500" r="4" stroke-width="2.600" /><circle cx="8.500" cy="8.500" r="6.200" stroke-width="2" stroke-dasharray="2.400 2.470" /></svg>
        </button>
      </div>
      <label class="check"><input v-model="showD" type="checkbox" />D</label>
    </div>

    <div class="quotes">
      <div class="quoteBox">
        <span class="cell c1 blue"><i>61,000▼</i><i>1,200</i><i>-1.93%</i></span>
        <span class="cell c2"><i>20,454</i><i class="blue">16.52%</i><i>1.94%</i></span>
        <span class="cell c3"><i>1,261백만</i></span>
        <span class="cell c4"><i class="ko">최우선</i><i class="blue">61,100</i><i class="blue">61,000</i></span>
        <span class="cell c5">
          <i class="ko">시</i><i class="red">62,400</i><i class="ko">고</i><i class="red">63,100</i><i class="ko">저</i>
          <i class="blue">60,100</i>
        </span>
      </div>
      <button class="trade buy">매수</button>
      <button class="trade sell">매도</button>
    </div>

    <svg class="chart" viewBox="6 76 1908 981">
      <rect x="6" y="76" width="1908" height="981" fill="#fff" />
      <rect x="49" y="77" width="1817" height="961" fill="#f8f8f8" />

      <g class="crisp">
        <path :d="gridX.map((x) => `M${x}.5 77V1038`).join('')" class="grid" />
        <path :d="gridY.map((y) => `M49 ${y}.5H1862`).join('')" class="grid" />
        <rect x="49" y="77" width="14" height="961" fill="#ccffcc" />
        <rect x="1633" y="77" width="5" height="961" fill="#ccffcc" />
        <rect v-for="y in yellow" :key="y[0]" :x="y[0]" y="77" :width="y[1]" height="961" fill="#ff0" />
        <rect v-for="p in profile" :key="p[0]" x="49" :y="p[0]" :width="p[2] - 49" :height="p[1]" fill="#fff" />
        <rect x="49" y="286" width="1727" height="54" fill="#ffcc99" />
        <path d="M49 621.500H1127.500V676.500H49z" fill="#fff" stroke="#808080" />
        <path d="M49 175H1862M49 854H1862" stroke="#808080" stroke-width="2" />
      </g>

      <polyline :points="stair" class="line" stroke="#c0c0c0" stroke-width="7" />

      <g class="crisp">
        <polygon :points="pink.up" fill="#ffaaff" />
        <polygon :points="pink.down" fill="#ccffff" />
        <polygon :points="gold.up" fill="#ffcc00" />
        <polygon :points="gold.down" fill="#c8e2ff" />
        <polyline :points="pink.a" class="line" stroke="#ffaaff" />
        <polyline :points="pink.b" class="line" stroke="#ccffff" />
        <polyline :points="gold.a" class="line" stroke="#ffcc00" />
        <polyline :points="gold.b" class="line" stroke="#c8e2ff" />
        <polyline v-for="(d, i) in dashed" :key="i" :points="d[1]" class="line" :stroke="d[0]" stroke-dasharray="4 3" />
      </g>

      <g class="marks">
        <path :d="olive" stroke="#99cc00" />
        <path :d="sarDown" stroke="#0000ff" />
        <path :d="sarUp" stroke="#ff0000" />
      </g>

      <g class="crisp">
        <polygon :points="ribbon.up" fill="#ff0000" />
        <polygon :points="ribbon.down" fill="#0000ff" />
        <polyline :points="ribbon.a" class="line" stroke="#ff0000" />
        <polyline :points="ribbon.b" class="line" stroke="#0000ff" />
        <path d="M1587 117L1589 130L1592 175H1587z" fill="#33cccc" />
      </g>

      <path d="M76 740H1853" stroke="#0000ff" stroke-width="7" stroke-linecap="round" />
      <polyline v-for="(c, i) in curves" :key="i" :points="c[2]" class="line" :stroke="c[0]" :stroke-width="c[1]" />
      <path d="M76 510.500H1852" stroke="#00ffff" stroke-width="5" stroke-linecap="round" />

      <g class="crisp" fill="none">
        <path :d="bodyPath(candlesUp)" stroke="#fff" />
        <path :d="bodyPath(candlesDown)" stroke="#fff" />
        <path :d="candlePath(candlesUp)" stroke="#e81b0c" />
        <path :d="candlePath(candlesDown)" stroke="#1560d0" />
        <path :d="dashUp" stroke="#e81b0c" stroke-dasharray="4 2" />
        <path :d="dashDown" stroke="#1560d0" stroke-dasharray="4 2" />
        <path d="M49 284.500H1862" stroke="#00ff00" stroke-width="7" />
        <path d="M49 332.500H1862" stroke="#993300" stroke-width="3" />
        <path d="M49 117.500H1862" stroke="#ff0000" />
        <path d="M49 847.500H1862" stroke="#0000ff" />
      </g>
      <path d="M705 342l5 5h-2v4h-6v-4h-2z" fill="#800080" />

      <!-- lower pane -->
      <g class="crisp">
        <rect v-for="b in bars" :key="b.x" :x="b.x + 0.5" :y="b.y + 0.5" :width="b.h > 1 ? 2 : 3" :height="b.h" fill="none" :stroke="b.up ? '#e81b0c' : '#1560d0'" />
        <polygon :points="obv.up" fill="#ff9900" />
        <polygon :points="obv.down" fill="#0000ff" />
        <polygon :points="kvo.down" fill="#ccffff" />
        <polygon :points="kvo.up" fill="#008a2e" />
        <polyline :points="obv.a" class="line" stroke="#ff9900" />
        <polyline :points="obv.b" class="line" stroke="#0000cc" />
        <polyline :points="kvo.b" class="line" stroke="#ccffff" />
        <polyline :points="kvo.a" class="line" stroke="#008a2e" />
      </g>
      <polyline :points="brown" class="line" stroke="#993300" stroke-width="3" />
      <g class="crisp" fill="none">
        <path v-for="b in bars.filter((v) => v.h > 20)" :key="b.x" :d="`M${b.x}.5 1036V${b.y}h2V1036`" :stroke="b.up ? '#e81b0c' : '#1560d0'" />
      </g>

      <!-- text over the plot -->
      <g v-for="row in cornerLabels" :key="row[0]" text-anchor="end">
        <text v-for="(t, i) in row[1]" :key="i" x="1861" :y="row[0] + 4" :fill="t[0]">{{ t[1] }}</text>
      </g>
      <text x="534" y="130" fill="#f00">최고 63,100 (-3,33%, 09:21)</text>
      <text x="1101" y="844" fill="#00f">최저 60,100 (1,50%, 09:41)</text>
      <text x="1863" y="302" fill="#0e0" text-anchor="end">당일시가 62,400 (0,32%)</text>
      <text x="1863" y="346" fill="#930" text-anchor="end">전일종가 62,200 (0,00%)</text>

      <g class="crisp" fill="none">
        <path d="M49 462.500H1862M1368.500 77V1036" stroke="#f00" />
        <path d="M1863.500 77V333" stroke="#e81b0c" stroke-width="3" />
        <path d="M1863.500 333V875" stroke="#1560d0" stroke-width="3" />
        <path d="M48.500 76V1056M1866.500 76V1056M6 877.500H1914M6 1038.500H1914M6.500 76V1056M1913.500 76V1056M6 76.500H1914M6 1056.500H1914" stroke="#909090" />
        <path :d="times.map((t) => `M${t[0]}.5 1038V1056`).join('') + 'M1839.500 1038V1056'" stroke="#909090" />
        <path :d="scaleRight.map((t) => `M1866 ${t[0]}.5h6`).join('')" stroke="#909090" />
        <path :d="scaleObv.map((t) => `M43 ${t[0]}.5h6`).join('')" stroke="#909090" />
        <path :d="minorTicks.map((y) => `M1866 ${y}.5h3`).join('')" stroke="#909090" />
      </g>

      <g fill="#444">
        <text v-for="p in prices" :key="p[1]" x="46" :y="p[0] + 4" text-anchor="end">{{ p[1] }}</text>
        <text v-for="p in scaleObv" :key="p[1]" class="small" x="42" :y="p[0] + 4" text-anchor="end">{{ p[1] }}</text>
        <text v-for="p in scaleRight" :key="p[1]" x="1874" :y="p[0] + 4">{{ p[1] }}</text>
        <text v-for="t in times" :key="t[0]" class="small" :x="t[0] + 2" y="1051">{{ t[1] }}</text>
        <text class="small" x="1874" y="1051">10:40:0</text>
      </g>
      <text x="1867" y="89" fill="#e81b0c">LC:1,50</text>
      <text class="small" x="1867" y="101" fill="#1560d0">HC:-3,33</text>

      <!-- crosshair and last price tags -->
      <g class="crisp">
        <rect x="8.500" y="448.500" width="36" height="28" fill="#ffdf70" stroke="#000" />
        <rect x="1870.500" y="448.500" width="41" height="28" fill="#ffdf70" stroke="#000" />
        <rect x="10" y="617" width="34" height="13" fill="#1560d0" />
        <rect x="1871" y="617" width="40" height="13" fill="#1560d0" />
        <rect x="1300.500" y="1038.500" width="135" height="16" fill="#ffdf70" stroke="#000" />
      </g>
      <g class="small">
        <text x="10" y="460" fill="#444">61,663</text>
        <text x="10" y="472" fill="#00f">-0,86%</text>
        <text x="1873" y="460" fill="#444">61,663</text>
        <text x="1873" y="472" fill="#00f">-0,86%</text>
        <text x="12" y="628" fill="#fff">1,000</text>
        <text x="14" y="640" fill="#1560d0">,93%</text>
        <text x="1873" y="628" fill="#fff">61,000</text>
        <text x="1875" y="640" fill="#1560d0">-1,93%</text>
      </g>
      <text x="1303" y="1051" fill="#444">2024/10/30(수) 09:46:50</text>

      <g class="crisp">
        <rect x="59.500" y="78.500" width="131" height="14" fill="#ededed" stroke="#c0c0c0" />
        <rect x="52.500" y="82.500" width="4" height="5" fill="#c0c0c0" stroke="#777" />
        <path d="M12.500 96.500h12v12h-12z" fill="#eee" stroke="#000" />
        <path d="M14.500 98.500h8v8h-8zM14.500 101.500h8M14.500 104.500h8M17.500 98.500v8M20.500 98.500v8" fill="none" stroke="#666" />
        <rect x="1903" y="881" width="7" height="7" fill="#444" />
        <path d="M1905 883l3 3M1908 883l-3 3" stroke="#fff" />
      </g>
      <text class="name" x="63" y="90" fill="#444">부산산업 매물대 수(13)</text>
    </svg>

    <footer class="bottom">
      <button class="step" aria-label="왼쪽으로"><svg width="5" height="8" viewBox="0 0 5 8"><path d="M5 0v8L0 4z" /></svg></button>
      <div class="track"><div class="thumb"></div></div>
      <button class="step" aria-label="재생"><svg width="5" height="8" viewBox="0 0 5 8"><path d="M0 0l5 4-5 4z" /></svg></button>
      <button class="step" aria-label="뒤로"><svg width="10" height="8" viewBox="0 0 10 8"><path d="M5 0v8L0 4zM10 0v8L5 4z" /></svg></button>
      <button class="step" aria-label="정지"><svg width="7" height="8" viewBox="0 0 7 8"><path d="M0 0h7v8H0z" /></svg></button>
      <button class="step" aria-label="앞으로"><svg width="10" height="8" viewBox="0 0 10 8"><path d="M0 0l5 4-5 4zM5 0l5 4-5 4z" /></svg></button>
      <div class="speed">
        <input v-model="speed" type="range" min="0" max="100" aria-label="속도" />
        <svg width="68" height="3" viewBox="0 0 68 3"><path d="M1 0v3M8 0v3M14 0v3M21 0v3M28 0v3M34 0v3M41 0v3M47 0v3M54 0v3M60 0v3M67 0v3" stroke="#000" /></svg>
      </div>
      <svg class="tools" width="218" height="16" viewBox="0 0 218 16" fill="none" stroke="#666">
        <path d="M1 2h10v6M1 2v10h6M8 8h6v6H8zM11 8v6M8 11h6" />
        <path d="M18 2h8v7h-8zM22 9v5h9V5h-5" /><path d="M23 9h8v5h-8z" fill="#ccc" />
        <path d="M35 4l3-2M35 12h13M36 10l3-3 2 2 4-4 2 2M46 2l2 2" stroke-dasharray="3 1" />
        <path d="M51 0h16v16H51z" fill="#fff" stroke="#ccc" />
        <path d="M55 3v12M52 3h13M62 6l-5 5M57 7v4h4M60 12l4 3" />
        <path d="M69 3h14M70 12l4-7 3 5 2-3 4 7" />
        <path d="M89 1v14M86 12l5-6 3 6 3-8 3 6" />
        <path d="M103 13L113 1M103 8l4 4 5-5 4 6" />
        <path d="M121 8l5-6 6 3-4 6-5 1zM123 8l6 2M127 14v-3M130 14v-3M132 14v-3" />
        <path d="M141 1h9v8h-9zM138 5h9v9h-9zM139 12l3-3 2 2 3-4" />
        <circle cx="160" cy="6" r="4.500" stroke-width="1.500" /><path d="M163 9.500l4 4.500" stroke-width="2" />
        <path d="M173 8h9M190 8h10M195 3v10" stroke-width="2.200" />
        <path d="M206.500 14L210.500 3h1L215.500 14M208 10.500h6" stroke-width="2.200" />
      </svg>
    </footer>
  </div>
</template>

<style>
body {
  background: #000;
}
</style>

<style scoped>
.window {
  display: flex;
  flex-direction: column;
  margin: 1px 3px 0 2px;
  background: #d0d0d0;
  font-family: 'Liberation Sans', 'Noto Sans CJK KR', sans-serif;
  font-size: 12px;
  color: #000;
}

.titlebar {
  display: flex;
  align-items: center;
  height: 24px;
  background: #3b5692;
  color: #fff;
  padding: 0 3px;
}

h1 {
  display: flex;
  align-items: baseline;
  flex: 1;
  gap: 7px;
  margin: 0 0 0 5px;
  font-size: 13px;
  font-weight: normal;
  white-space: nowrap;
  overflow: hidden;
}

.badge {
  box-sizing: border-box;
  width: 14px;
  height: 16px;
  border: 1px solid #c9d3e8;
  border-radius: 3px;
  background: #5874ae;
  font-weight: bold;
  line-height: 14px;
  text-align: center;
}

.winIcons svg {
  display: block;
}

.toolbar {
  display: flex;
  align-items: center;
  gap: 1px;
  padding: 5px 4px 3px;
  height: 20px;
}

button,
input,
select {
  font-family: inherit;
  font-size: 13px;
  color: #000;
  padding: 0;
  margin: 0;
  box-sizing: border-box;
}

input,
.num button,
.w38 select {
  font-size: 12px;
}

.btn,
.group,
.combo,
.count,
.stock {
  height: 20px;
  border: 1px solid #8c8c8c;
  background: #ececec;
  box-sizing: border-box;
}

.btn {
  display: flex;
  align-items: center;
  justify-content: center;
  width: 20px;
}

.w30 {
  width: 30px;
}

.combo {
  display: flex;
  align-items: center;
  background: #fff;
  margin-left: 1px;
}

.combo select,
.combo input {
  flex: 1;
  min-width: 0;
  height: 18px;
  border: 0;
  padding-left: 3px;
  background: transparent;
  appearance: none;
  outline: none;
}

.combo svg {
  box-sizing: content-box;
  padding: 7px 2px 6px;
  background: #ececec;
  border-left: 1px solid #bbb;
}

.grey select {
  color: #777;
}

.w32 {
  width: 32px;
}

.w38 {
  width: 38px;
}

.w38 select {
  padding-left: 8px;
}

.w68 {
  width: 68px;
}

.stock {
  position: relative;
  display: flex;
  align-items: center;
  width: 81px;
  background: #fff;
  font-size: 13px;
}

.stock b {
  width: 17px;
  height: 17px;
  line-height: 17px;
  background: #0b6460;
  color: #fff;
  font-weight: normal;
  text-align: center;
}

.stock span {
  margin-left: 2px;
}

.stock i {
  position: absolute;
  right: 1px;
  bottom: 1px;
  border: 4px solid #aaa;
  border-top-color: transparent;
  border-left-color: transparent;
}

.group {
  display: flex;
  margin-left: 1px;
}

.group button {
  width: 19px;
  height: 18px;
  border: 0;
  border-right: 1px solid #aaa;
  background: transparent;
}

.group button:last-child {
  border-right: 0;
}

.group .on {
  background: #4a80c8;
  color: #fff;
}

.icons svg {
  display: block;
}

.count {
  width: 30px;
  margin-left: 1px;
  background: #fff;
  text-align: right;
}

.total {
  width: 34px;
  color: #444;
}

.check {
  display: flex;
  align-items: center;
  gap: 3px;
  margin-left: 2px;
}

.check input {
  width: 13px;
  height: 13px;
  appearance: none;
  background: #fff;
  border: 1px solid #999;
}

.quotes {
  display: flex;
  gap: 2px;
  height: 20px;
  padding: 0 4px 3px;
}

.quoteBox {
  display: flex;
  box-sizing: border-box;
  width: 751px;
  border: 1px solid #8c8c8c;
  background: #f0f0f0;
}

.cell {
  display: grid;
  align-items: baseline;
  box-sizing: border-box;
  border-right: 1px solid #aaa;
  padding: 0 3px;
  line-height: 18px;
  text-align: right;
}

.cell:last-child {
  border-right: 0;
}

.cell i {
  font-style: normal;
}

.ko {
  font-size: 13px;
}

.c1 {
  grid-template-columns: 1fr 48px 48px;
  width: 173px;
}

.c2 {
  grid-template-columns: 1fr 58px 41px;
  width: 170px;
}

.c3 {
  width: 82px;
}

.c4 {
  grid-template-columns: 1fr 43px 51px;
  width: 141px;
  padding-right: 6px;
}

.c5 {
  display: flex;
  flex: 1;
  justify-content: space-between;
  padding-right: 6px;
}

.blue {
  color: #1046d0;
}

.red {
  color: #e81b0c;
}

.trade {
  width: 40px;
  border: 1px solid #8c8c8c;
}

.buy {
  background: #f5d0ca;
}

.sell {
  background: #c5dcf2;
}

.chart {
  display: block;
  margin: 0 3px 0 4px;
}

.small {
  font-size: 11px;
}

.name {
  font-size: 13px;
}

.crisp {
  shape-rendering: crispEdges;
}

.grid {
  fill: none;
  stroke: #d3d3d3;
  stroke-dasharray: 4 4;
}

.line {
  fill: none;
  stroke-linejoin: round;
}

.marks path {
  fill: none;
  stroke-width: 4;
  stroke-linecap: round;
}

.bottom {
  display: flex;
  align-items: center;
  height: 17px;
  padding: 0 4px 3px;
  background: #ebebeb;
}

.step {
  display: flex;
  align-items: center;
  justify-content: center;
  width: 17px;
  height: 17px;
  background: #f4f4f4;
  border: 1px solid #fff;
  border-right-color: #777;
  border-bottom-color: #777;
}

.track {
  display: flex;
  justify-content: flex-end;
  flex: 1;
  height: 16px;
  background: #f7f7f7;
}

.thumb {
  box-sizing: border-box;
  width: 20%;
  background: #f0f0f0;
  border: 1px solid #fff;
  border-bottom: 2px solid #777;
  border-right-color: #777;
}

.speed {
  display: flex;
  flex-direction: column;
  width: 70px;
  margin-left: 6px;
}

.speed input {
  width: 70px;
  height: 12px;
  appearance: none;
  background: linear-gradient(#777, #777) center / 100% 2px no-repeat;
}

.speed input::-webkit-slider-thumb {
  appearance: none;
  width: 4px;
  height: 12px;
  background: #eee;
  border: 1px solid #777;
}

.tools {
  margin-left: 8px;
}
</style>
